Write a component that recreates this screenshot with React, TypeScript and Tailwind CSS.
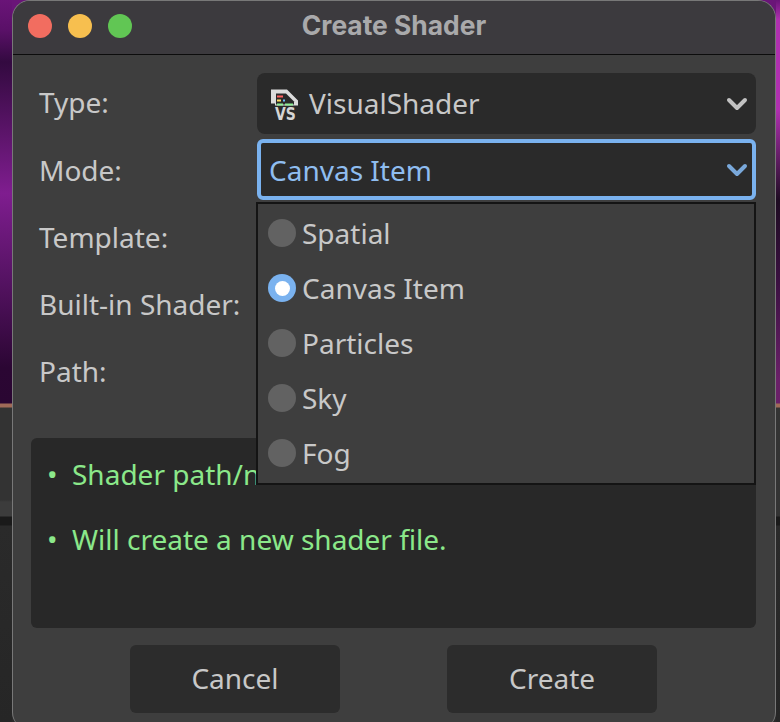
import { ChevronDown } from "lucide-react";

const MODES = ["Spatial", "Canvas Item", "Particles", "Sky", "Fog"];
const LABELS = ["Template:", "Built-in Shader:", "Path:"];

function VisualShaderIcon() {
  return (
    <svg width="27" height="40" viewBox="0 0 27 40" className="shrink-0">
      <g transform="translate(0 5.5)">
        <path d="M0 0H16L27 11V16H4V14H0Z" fill="#dcdcdc" />
        <path d="M5 4H15L23 12V15H5Z" fill="#2a2a2a" />
        <rect x="6" y="6" width="6" height="2" fill="#ff5f5f" />
        <rect x="6" y="10" width="4" height="2" fill="#ffdd65" />
        <rect x="12" y="10" width="2" height="2" fill="#70bfff" />
        <rect x="6" y="14" width="6" height="2" fill="#8eef97" />
        <rect x="14" y="14" width="8" height="2" fill="#8eef97" />
        <text transform="translate(4 30) scale(1 1.25)" fontFamily="DejaVu Sans" fontWeight="bold" fontSize="14" fill="#d5d5d5">
          VS
        </text>
      </g>
    </svg>
  );
}

function Label({ children }: { children: React.ReactNode }) {
  return <span className="text-[28px] leading-none text-[#c8c8c8]">{children}</span>;
}

export default function App() {
  return (
    <div
      className="flex h-[722px] w-[780px] items-start overflow-hidden bg-[linear-gradient(to_bottom,#6a1578_0px,#6a1578_24px,#2a2a2a_700px)]"
      style={{ fontFamily: '"Noto Sans", sans-serif' }}
    >
      {/* desktop showing either side of the dialog */}
      <div className="h-[722px] w-3 shrink-0 bg-[linear-gradient(to_bottom,#6a1478_0px,#5a1068_30px,#330a40_62px,#5a1468_130px,#7f1d8f_193px,#5a1468_270px,#2b0633_368px,#2a0632_403px,#a06a58_404px,#a06a58_407px,#333333_408px,#333333_500px,#3c3c3c_502px,#3c3c3c_516px,#1a1a1a_517px,#1a1a1a_525px,#2a2a2a_526px,#262626_722px)]" />

      <div className="flex h-[730px] w-[764px] shrink-0 flex-col overflow-hidden rounded-[18px] border-x border-t border-[#787878] bg-[#3e3e3e]">
        <header className="relative flex h-[54px] shrink-0 items-center justify-center border-b border-[#0c0c0c] bg-[#3c3a3e] pb-[5px]">
          <div className="absolute left-[15px] top-[13px] flex gap-4">
            <span className="size-6 rounded-full bg-[#f26d60]" />
            <span className="size-6 rounded-full bg-[#f7bf4f]" />
            <span className="size-6 rounded-full bg-[#61c654]" />
          </div>
          <h1 className="text-[26.4px] leading-none font-bold text-[#a9a9ab]" style={{ fontFamily: "Inter, sans-serif" }}>
            Create Shader
          </h1>
        </header>

        <div className="relative flex flex-1 flex-col pl-[18px] pr-[19px]">
          <div className="mt-[18px] flex flex-col gap-[6px]">
            <div className="grid h-[61px] grid-cols-[226px_1fr] items-center">
              <span className="pl-[8px]">
                <Label>Type:</Label>
              </span>
              <div className="flex h-[61px] items-center gap-[11px] rounded-lg bg-[#2a2a2a] pl-[14px] pr-[3px] text-[28px] text-[#c8c8c8]">
                <VisualShaderIcon />
                <span className="flex-1 pb-[2px]">VisualShader</span>
                <ChevronDown size={32} strokeWidth={3} className="text-[#c2c2c2]" />
              </div>
            </div>
            <div className="grid h-[61px] grid-cols-[226px_1fr] items-start">
              <span className="self-center pl-[8px] pt-[2px]">
                <Label>Mode:</Label>
              </span>
              <div className="-mt-px flex h-[61px] items-center rounded-md border-4 border-[#7ab2ef] bg-[#2a2a2a] pl-[8px] text-[28px] text-[#8fbdf0]">
                <span className="flex-1">Canvas Item</span>
                <ChevronDown size={32} strokeWidth={3} className="-mr-px text-[#79a8da]" />
              </div>
            </div>
            {LABELS.map((label) => (
              <div key={label} className="flex h-[61px] items-center pb-[2px] pl-[8px]">
                <Label>{label}</Label>
              </div>
            ))}
          </div>

          <div className="mt-[36px] h-[190px] rounded-md bg-[#282828] pl-[16px] pt-[18px] text-[28px] leading-[36px] text-[#8be88a]">
            <p className="flex">
              <span className="w-[25px]">•</span>Shader path/name is valid.
            </p>
            <p className="mt-[29px] flex">
              <span className="w-[25px]">•</span>Will create a new shader file.
            </p>
          </div>

          <div className="mt-[17px] flex justify-center gap-[107px]">
            <button className="h-[68px] w-[210px] rounded-md bg-[#2c2c2c] pb-[2px] text-[28px] text-[#c8c8c8]">Cancel</button>
            <button className="h-[68px] w-[210px] rounded-md bg-[#2c2c2c] pb-[2px] text-[28px] text-[#c8c8c8]">Create</button>
          </div>

          {/* open option menu */}
          <div className="absolute left-[243px] top-[147px] flex h-[283px] w-[500px] flex-col gap-[19px] border-2 border-[#141414] bg-[#3e3e3e] pl-[10px] pt-[11px]">
            {MODES.map((mode) => (
              <div key={mode} className="flex h-[36px] items-center gap-[6px] text-[28px] text-[#c8c8c8]">
                {mode === "Canvas Item" ? (
                  <span className="flex size-[28px] items-center justify-center rounded-full bg-[#7ab2ef]">
                    <span className="size-[15px] rounded-full bg-white" />
                  </span>
                ) : (
                  <span className="size-[28px] rounded-full bg-[#626262]" />
                )}
                {mode}
              </div>
            ))}
          </div>
        </div>
      </div>

      <div className="h-[722px] w-1 shrink-0 bg-[linear-gradient(to_bottom,#6a1478_0px,#b030b0_20px,#b030b0_110px,#1e0c22_200px,#3a1040_280px,#6a2068_380px,#6a2068_403px,#a06a58_404px,#a06a58_407px,#333333_408px,#333333_516px,#1a1a1a_517px,#1a1a1a_525px,#2a2a2a_526px,#262626_722px)]" />
    </div>
  );
}
